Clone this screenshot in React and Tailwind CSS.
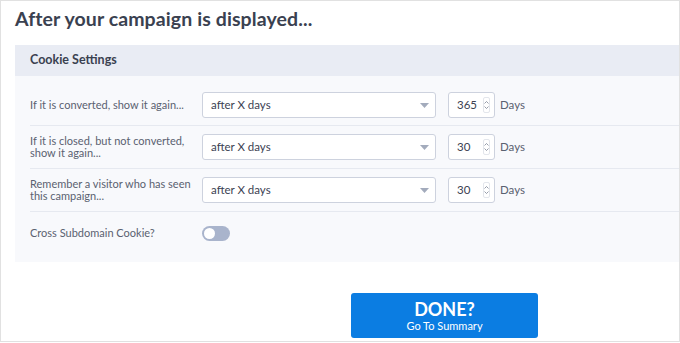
import React from "react";

const font = { fontFamily: "Lato, 'Open Sans', sans-serif" };

function Select() {
  return (
    <div className="relative w-[234px] h-[26px] bg-white border border-[#cdd2de] rounded-[3px] flex items-center pl-[8px] text-[11.5px] text-[#3b4252]">
      after X days
      <svg className="absolute right-[6px] top-[10px]" width="9" height="5" viewBox="0 0 9 5">
        <path d="M0 0 L9 0 L4.5 5 Z" fill="#a3abbc" />
      </svg>
    </div>
  );
}

function NumberInput({ value }) {
  return (
    <div className="relative w-[47px] h-[26px] bg-white border border-[#cdd2de] rounded-[3px] flex items-center pl-[8px] text-[11.5px] text-[#3b4252]">
      {value}
      <div className="absolute right-[4px] top-[4px] w-[7px] h-[16px] rounded-[2px] border border-[#e3e6ec] flex flex-col items-center justify-center gap-[2px]">
        <svg width="5" height="3" viewBox="0 0 5 3"><path d="M0.5 2.5 L2.5 0.5 L4.5 2.5" stroke="#7b8393" strokeWidth="0.8" fill="none" /></svg>
        <svg width="5" height="3" viewBox="0 0 5 3"><path d="M0.5 0.5 L2.5 2.5 L4.5 0.5" stroke="#7b8393" strokeWidth="0.8" fill="none" /></svg>
      </div>
    </div>
  );
}

function Row({ label, value, first }) {
  return (
    <div className={`flex items-center ${first ? "pt-[8px] pb-[7px]" : "py-[8px]"} border-b border-[#e6e9f0]`}>
      <div className="w-[172px] pr-[10px] text-[11px] leading-[12px] text-[#5a6170]">{label}</div>
      <Select />
      <div className="ml-[12px]"><NumberInput value={value} /></div>
      <div className="ml-[5px] text-[11.5px] text-[#5a6170]">Days</div>
    </div>
  );
}

export default function App() {
  return (
    <div style={font} className="w-[680px] h-[342px] border border-[#e1e1e1] bg-white overflow-hidden pl-[14px]">
      <h1 className="pt-[6px] text-[19.5px] font-bold text-[#3a4150] leading-[24px] tracking-[0.1px]">After your campaign is displayed...</h1>
      <div className="mt-[14px] bg-[#f8f9fc]">
        <div className="h-[31px] bg-[#e9ecf4] flex items-center pl-[15px] text-[12.5px] font-bold text-[#3a4150]">Cookie Settings</div>
        <div className="pl-[15px] pt-[8px] pb-[8px]">
          <Row first label="If it is converted, show it again..." value="365" />
          <Row label={<>If it is closed, but not converted,<br />show it again...</>} value="30" />
          <Row label={<>Remember a visitor who has seen<br />this campaign...</>} value="30" />
          <div className="flex items-center h-[42px]">
            <div className="w-[172px] text-[11px] text-[#5a6170]">Cross Subdomain Cookie?</div>
            <div className="w-[28px] h-[15px] rounded-full bg-[#a9b4cc] flex items-center pl-[2px]">
              <div className="w-[11px] h-[11px] rounded-full bg-white" />
            </div>
          </div>
        </div>
      </div>
      <div className="mt-[31px] ml-[336px] w-[187px] h-[45px] rounded-[3px] bg-[#0b7de2] flex flex-col items-center justify-center text-white">
        <div className="text-[18px] font-bold leading-[19px]">DONE?</div>
        <div className="text-[11px] leading-[13px]">Go To Summary</div>
      </div>
    </div>
  );
}
